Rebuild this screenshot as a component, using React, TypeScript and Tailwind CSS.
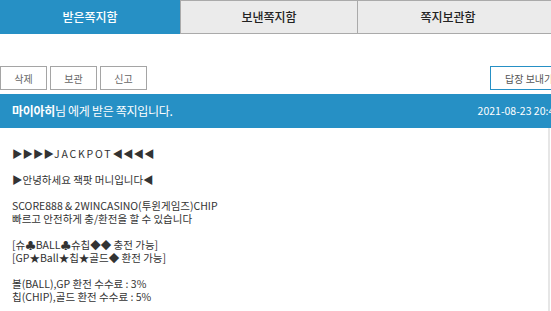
import React from "react";

const font = { fontFamily: '"Noto Sans CJK KR", "Noto Sans", sans-serif' };

export default function App() {
  const lines: string[] = [
    "▶▶▶▶JACKPOT◀◀◀◀",
    "",
    "▶안녕하세요 잭팟 머니입니다◀",
    "",
    "SCORE888 & 2WINCASINO(투윈게임즈)CHIP",
    "빠르고 안전하게 충/환전을 할 수 있습니다",
    "",
    "[슈♣BALL♣슈칩◆◆ 충전 가능]",
    "[GP★Ball★칩★골드◆ 환전 가능]",
    "",
    "볼(BALL),GP 환전 수수료 : 3%",
    "칩(CHIP),골드 환전 수수료 : 5%",
  ];
  return (
    <div className="w-[551px] h-[311px] overflow-hidden bg-white" style={font}>
      <div className="w-[600px]">
        {/* tabs */}
        <div className="flex h-[34px] text-[12px] font-medium">
          <div className="w-[180px] bg-[#2690c5] text-white flex items-center justify-center">
            받은쪽지함
          </div>
          <div className="w-[177px] bg-[#ebebeb] text-[#222] border border-[#aaaaaa] border-r-0 flex items-center justify-center">
            보낸쪽지함
          </div>
          <div className="flex-1 bg-[#ebebeb] text-[#222] border border-[#aaaaaa] flex items-center">
            <div className="w-[180px] text-center">쪽지보관함</div>
          </div>
        </div>
        {/* buttons */}
        <div className="flex items-start mt-[32px] h-[28px]">
          <div className="flex gap-[3px]">
            {["삭제", "보관", "신고"].map((t) => (
              <button
                key={t}
                className="w-[47px] h-[24px] border border-[#a5a5a5] bg-white text-[10px] text-[#666] flex items-center justify-center"
              >
                {t}
              </button>
            ))}
          </div>
          <button className="ml-[343px] w-[90px] h-[24px] border border-[#2690c5] bg-white text-[10px] text-[#555] flex items-center justify-start pl-[14px] whitespace-nowrap">
            답장 보내기
          </button>
        </div>
        {/* header bar */}
        <div className="h-[34px] bg-[#2690c5] text-white flex items-center pl-[12px]">
          <div className="text-[12px] tracking-[-0.3px]">
            <span className="font-bold">마이아히</span>님 에게 받은 쪽지입니다.
          </div>
          <div className="ml-[305px] text-[10.5px] whitespace-nowrap">2021-08-23 20:42</div>
        </div>
        {/* content */}
        <div className="flex">
          <div className="w-[548px] h-[200px] pl-[12px] pt-[19px] text-[10.5px] leading-[13px] text-[#333]">
            {lines.map((l, i) =>
              l === "" ? (
                <div key={i} className="h-[13px]" />
              ) : i === 0 ? (
                <div key={i}>
                  ▶▶▶▶<span className="tracking-[1.8px]">JACKPOT</span>◀◀◀◀
                </div>
              ) : (
                <div key={i}>{l}</div>
              )
            )}
          </div>
          <div className="w-[2px] h-[200px] bg-[#e6e6e6]" />
        </div>
      </div>
    </div>
  );
}
